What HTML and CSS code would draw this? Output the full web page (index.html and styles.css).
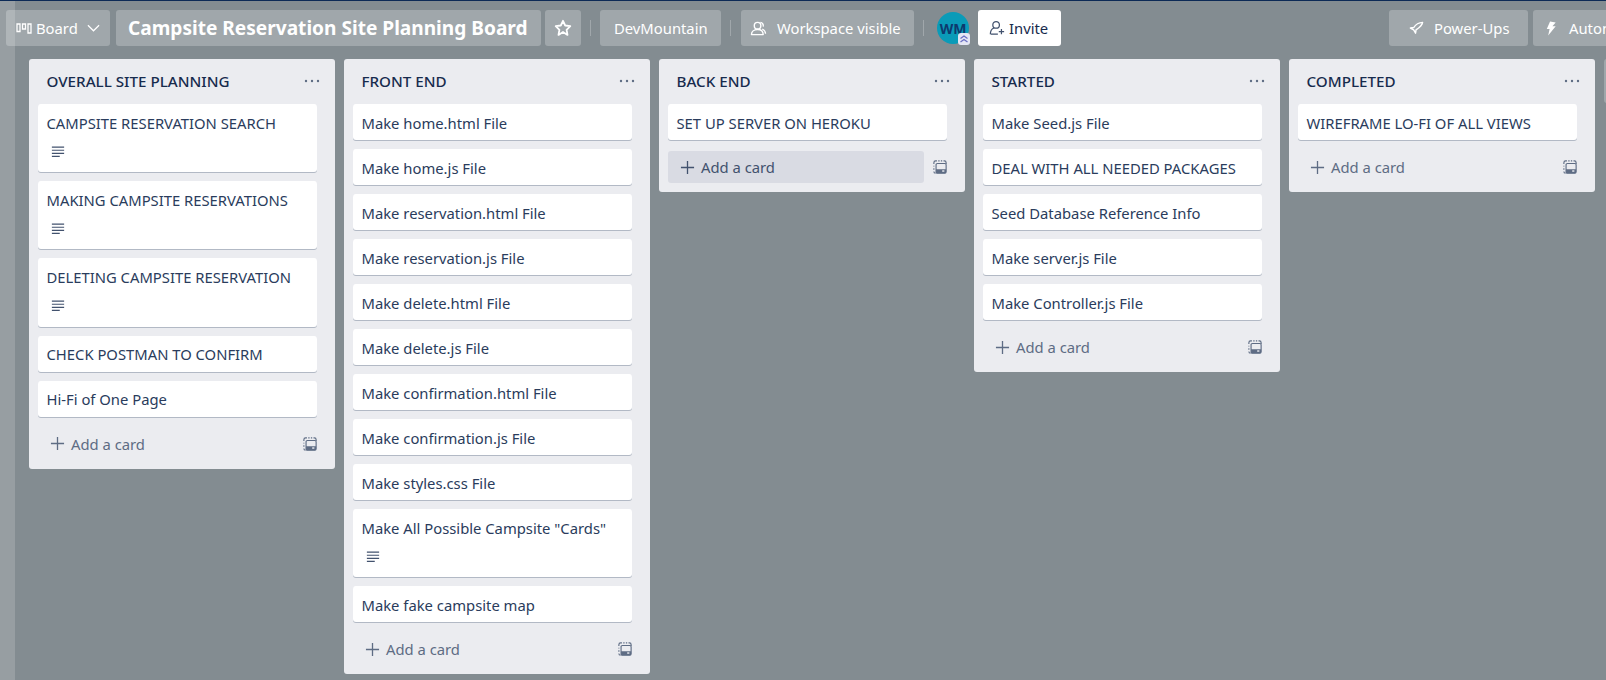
FILE: index.html
```html
<!DOCTYPE html>
<html lang="en">

<head>
    <meta charset="UTF-8">
    <meta name="viewport" content="width=device-width, initial-scale=1.0">
    <title>Campsite Reservation Site Planning Board</title>
    <link rel="stylesheet" href="styles.css">
</head>

<body>
    <svg class="defs" width="0" height="0">
        <symbol id="desc" viewBox="0 0 16 16">
            <path d="M1 2.500h14M1 6h14M1 9.500h14M1 13h9" fill="none" stroke="currentColor" stroke-width="1.300" />
        </symbol>
        <symbol id="plus" viewBox="0 0 16 16">
            <path d="M8 1v14M1 8h14" fill="none" stroke="currentColor" stroke-width="1.400" />
        </symbol>
        <symbol id="tpl" viewBox="0 0 16 16">
            <path d="M1 4.500v-1.500a2 2 0 0 1 2-2h1.500M6 1h1.500M9 1h1.500M12 1h1a2 2 0 0 1 2 2v1.500M1 6.500v1M1 9.500v1.500M1 13a2 2 0 0 0 2 2" fill="none" stroke="currentColor" stroke-width="1.300" />
            <rect x="3.500" y="4" width="11.500" height="11" rx="1.500" fill="none" stroke="currentColor" stroke-width="1.300" />
            <path d="M3.500 10.500h11.500v3.500a1 1 0 0 1-1 1h-9.500a1 1 0 0 1-1-1z" fill="currentColor" />
            <rect x="10.500" y="11.800" width="2.500" height="1.600" fill="#ebecf0" />
        </symbol>
        <symbol id="dots" viewBox="0 0 16 4">
            <circle cx="2" cy="2" r="1.200" fill="currentColor" />
            <circle cx="8" cy="2" r="1.200" fill="currentColor" />
            <circle cx="14" cy="2" r="1.200" fill="currentColor" />
        </symbol>
    </svg>

    <div class="page">
        <header class="board-header">
            <div class="btn btn-board">
                <svg class="ic-board" viewBox="0 0 16 12"><path d="M1 2h3v7.500h-3zM6.500 2h3v5h-3zM12 2h3v9h-3z" fill="none" stroke="currentColor" stroke-width="1.300"/></svg>
                <span>Board</span>
                <svg class="ic-chev" viewBox="0 0 14 8"><path d="M1 1l6 6 6-6" fill="none" stroke="currentColor" stroke-width="1.300"/></svg>
            </div>
            <h1 class="btn board-title">Campsite Reservation Site Planning Board</h1>
            <div class="btn btn-star">
                <svg class="ic-star" viewBox="0 0 18 18"><path d="M9 1.800l2.200 4.700 5.100.7-3.700 3.600.9 5.100L9 13l-4.500 2.900.9-5.100-3.700-3.600 5.100-.7z" fill="none" stroke="currentColor" stroke-width="1.800" stroke-linejoin="round"/></svg>
            </div>
            <span class="sep"></span>
            <div class="btn btn-text btn-team">DevMountain</div>
            <span class="sep sep-wide"></span>
            <div class="btn btn-text btn-visible">
                <svg class="ic-vis" viewBox="0 0 18 16"><circle cx="8" cy="5" r="3.500" fill="none" stroke="currentColor" stroke-width="1.500"/><path d="M1.500 14.500c0-3 2.500-5.500 6.500-5.500s6 2.500 6 5.500z" fill="none" stroke="currentColor" stroke-width="1.500" stroke-linejoin="round"/><path d="M11 1.500c2 .3 3.500 2 3 4.500M13 8.500c2 1 3.500 3 3.500 5" fill="none" stroke="currentColor" stroke-width="1.400"/></svg>
                <span>Workspace visible</span>
            </div>
            <span class="sep sep-last"></span>
            <div class="avatar">WM
                <svg class="badge" viewBox="0 0 12 12"><rect width="12" height="12" rx="3" fill="#e4e6f4"/><path d="M2.500 5.500L6 3l3.500 2.500M2.500 9L6 6.500 9.500 9" fill="none" stroke="#6a6fc4" stroke-width="1.300"/></svg>
            </div>
            <div class="btn btn-invite">
                <svg class="ic-invite" viewBox="0 0 18 18"><circle cx="8" cy="5.500" r="3.700" fill="none" stroke="currentColor" stroke-width="1.400"/><path d="M1.500 16c0-3.500 1.500-6 4-7M2 16h8M14 10v6M11 13h6" fill="none" stroke="currentColor" stroke-width="1.400"/></svg>
                <span>Invite</span>
            </div>
            <div class="spacer"></div>
            <div class="btn btn-text btn-power">
                <svg class="ic-rocket" viewBox="0 0 16 16"><path d="M14.500 1.500c-4 .2-7.500 2.500-9.500 5.500l-3.500.5 3.500 2 2 3.500.5-3.500c3-2 6.500-4.500 7-8z" fill="none" stroke="currentColor" stroke-width="1.500" stroke-linejoin="round"/></svg>
                <span>Power-Ups</span>
            </div>
            <div class="btn btn-text btn-auto">
                <svg class="ic-bolt" viewBox="0 0 12 16"><path d="M5 .5L1.500 8.500h3L3 15.500 11 5.500H7.500L11 1.500z" fill="currentColor"/></svg>
                <span>Automation</span>
            </div>
        </header>

        <main class="board">
            <section class="list">
                <div class="list-head">
                    <h2>OVERALL SITE PLANNING</h2>
                    <svg class="ic-dots"><use href="#dots" /></svg>
                </div>
                <div class="card">CAMPSITE RESERVATION SEARCH<svg class="ic-desc"><use href="#desc" /></svg></div>
                <div class="card">MAKING CAMPSITE RESERVATIONS<svg class="ic-desc"><use href="#desc" /></svg></div>
                <div class="card">DELETING CAMPSITE RESERVATION<svg class="ic-desc"><use href="#desc" /></svg></div>
                <div class="card">CHECK POSTMAN TO CONFIRM</div>
                <div class="card">Hi-Fi of One Page</div>
                <div class="list-foot">
                    <div class="add-card"><svg class="ic-plus"><use href="#plus" /></svg>Add a card</div>
                    <svg class="ic-tpl"><use href="#tpl" /></svg>
                </div>
            </section>

            <section class="list">
                <div class="list-head">
                    <h2>FRONT END</h2>
                    <svg class="ic-dots"><use href="#dots" /></svg>
                </div>
                <div class="card">Make home.html File</div>
                <div class="card">Make home.js File</div>
                <div class="card">Make reservation.html File</div>
                <div class="card">Make reservation.js File</div>
                <div class="card">Make delete.html File</div>
                <div class="card">Make delete.js File</div>
                <div class="card">Make confirmation.html File</div>
                <div class="card">Make confirmation.js File</div>
                <div class="card">Make styles.css File</div>
                <div class="card">Make All Possible Campsite "Cards"<svg class="ic-desc"><use href="#desc" /></svg></div>
                <div class="card">Make fake campsite map</div>
                <div class="list-foot">
                    <div class="add-card"><svg class="ic-plus"><use href="#plus" /></svg>Add a card</div>
                    <svg class="ic-tpl"><use href="#tpl" /></svg>
                </div>
            </section>

            <section class="list">
                <div class="list-head">
                    <h2>BACK END</h2>
                    <svg class="ic-dots"><use href="#dots" /></svg>
                </div>
                <div class="card">SET UP SERVER ON HEROKU</div>
                <div class="list-foot">
                    <div class="add-card add-hover"><svg class="ic-plus"><use href="#plus" /></svg>Add a card</div>
                    <svg class="ic-tpl"><use href="#tpl" /></svg>
                </div>
            </section>

            <section class="list">
                <div class="list-head">
                    <h2>STARTED</h2>
                    <svg class="ic-dots"><use href="#dots" /></svg>
                </div>
                <div class="card">Make Seed.js File</div>
                <div class="card">DEAL WITH ALL NEEDED PACKAGES</div>
                <div class="card">Seed Database Reference Info</div>
                <div class="card">Make server.js File</div>
                <div class="card">Make Controller.js File</div>
                <div class="list-foot">
                    <div class="add-card"><svg class="ic-plus"><use href="#plus" /></svg>Add a card</div>
                    <svg class="ic-tpl"><use href="#tpl" /></svg>
                </div>
            </section>

            <section class="list">
                <div class="list-head">
                    <h2>COMPLETED</h2>
                    <svg class="ic-dots"><use href="#dots" /></svg>
                </div>
                <div class="card">WIREFRAME LO-FI OF ALL VIEWS</div>
                <div class="list-foot">
                    <div class="add-card"><svg class="ic-plus"><use href="#plus" /></svg>Add a card</div>
                    <svg class="ic-tpl"><use href="#tpl" /></svg>
                </div>
            </section>

            <div class="add-list"></div>
        </main>

        <div class="side-strip"></div>
    </div>
</body>

</html>
```

FILE: styles.css
```css
* {
    padding: 0;
    margin: 0;
    box-sizing: border-box;
}

body {
    font-family: "Noto Sans", "Open Sans", sans-serif;
    color: #172b4d;
    overflow: hidden;
}

.defs {
    position: absolute;
}

.page {
    position: relative;
    width: 1606px;
    height: 680px;
    overflow: hidden;
    background-color: #838c91;
    border-top: 1px solid #0c2a56;
}

/* header */
.board-header {
    display: flex;
    align-items: center;
    width: 1652px;
    height: 58px;
    padding: 0 0 4px 6px;
}

.board-header svg {
    flex-shrink: 0;
}

.btn {
    display: flex;
    flex-shrink: 0;
    align-items: center;
    height: 36px;
    border-radius: 3px;
    background-color: rgba(255, 255, 255, .24);
    color: #fff;
    font-size: 14.800px;
}

.btn-board {
    width: 104px;
    padding-left: 10px;
    margin-right: 6px;
}

.ic-board {
    width: 16px;
    height: 12px;
    margin-right: 4px;
}

.ic-chev {
    width: 13px;
    height: 8px;
    margin-left: 9px;
}

.board-title {
    width: 425px;
    padding-left: 12px;
    margin-right: 4px;
    font-size: 19.100px;
    font-weight: 700;
    white-space: nowrap;
}

.btn-star {
    justify-content: center;
    width: 36px;
}

.ic-star {
    width: 18px;
    height: 18px;
}

.sep {
    width: 1px;
    height: 16px;
    margin: 0 9px;
    background-color: rgba(255, 255, 255, .24);
}

.sep-wide {
    margin-right: 10px;
}

.btn-text {
    padding: 0 13px;
    white-space: nowrap;
}

.btn-team {
    width: 121px;
    padding-left: 14px;
}

.btn-visible {
    width: 173px;
    padding: 0 9px;
}

.ic-vis {
    width: 17px;
    height: 15px;
    margin-right: 10px;
}

.sep-last {
    margin-right: 13px;
}

.avatar {
    position: relative;
    display: flex;
    flex-shrink: 0;
    align-items: center;
    justify-content: center;
    width: 32px;
    height: 32px;
    margin-right: 9px;
    border-radius: 50%;
    background-color: #0a9bb8;
    color: #0d3a6e;
    font-size: 14px;
    font-weight: 700;
}

.badge {
    position: absolute;
    right: -1px;
    bottom: -1px;
    width: 12px;
    height: 12px;
}

.btn-invite {
    width: 83px;
    padding-left: 11px;
    background-color: #fff;
    color: #172b4d;
}

.ic-invite {
    width: 16px;
    height: 16px;
    margin-right: 4px;
    color: #42526e;
}

.spacer {
    flex: 1;
}

.btn-power {
    width: 139px;
    padding-left: 20px;
    margin-right: 5px;
}

.ic-rocket {
    width: 15px;
    height: 15px;
    margin-right: 10px;
}

.btn-auto {
    width: 119px;
    padding-left: 12px;
}

.ic-bolt {
    width: 12px;
    height: 15px;
    margin-right: 12px;
}

/* lists */
.board {
    display: flex;
    align-items: flex-start;
    gap: 9px;
    padding-left: 29px;
}

.list {
    flex-shrink: 0;
    width: 306px;
    padding: 0 18px 9px 9px;
    border-radius: 3px;
    background-color: #ebecf0;
}

.list-head {
    display: flex;
    align-items: center;
    justify-content: space-between;
    height: 45px;
    padding: 0 0 2px 8.500px;
    margin-right: -13px;
}

.list-head h2 {
    font-size: 15.200px;
    font-weight: 500;
    color: #172b4d;
}

.ic-dots {
    width: 16px;
    height: 4px;
    margin-right: 10px;
    color: #5e6c84;
}

.card {
    min-height: 36px;
    padding: 8.500px 8.500px 7.500px;
    margin-bottom: 9px;
    border-radius: 3px;
    background-color: #fff;
    box-shadow: 0 1px 0 rgba(9, 30, 66, .25);
    color: #2a3c5c;
    font-size: 14.800px;
    line-height: 20px;
    white-space: nowrap;
}

.ic-desc {
    display: block;
    width: 14px;
    height: 14px;
    margin: 12.500px 0 5.700px 4.500px;
    color: #42526e;
}

.list-foot {
    display: flex;
    align-items: center;
    justify-content: space-between;
    margin-top: 11px;
}

.add-card {
    display: flex;
    align-items: center;
    width: 256px;
    height: 32px;
    padding-left: 12px;
    border-radius: 3px;
    color: #5e6c84;
    font-size: 14.800px;
}

.add-hover {
    background-color: #d9dbe3;
    color: #42526e;
}

.ic-plus {
    width: 15px;
    height: 15px;
    margin-right: 6px;
}

.ic-tpl {
    width: 14px;
    height: 14px;
    color: #5e6c84;
}

.add-list {
    flex-shrink: 0;
    width: 306px;
    height: 44px;
    border-radius: 3px;
    background-color: rgba(255, 255, 255, .24);
}

/* lighter strip over the left edge */
.side-strip {
    position: absolute;
    top: -1px;
    left: 0;
    width: 15px;
    height: 681px;
    background-color: rgba(255, 255, 255, .16);
}
```
